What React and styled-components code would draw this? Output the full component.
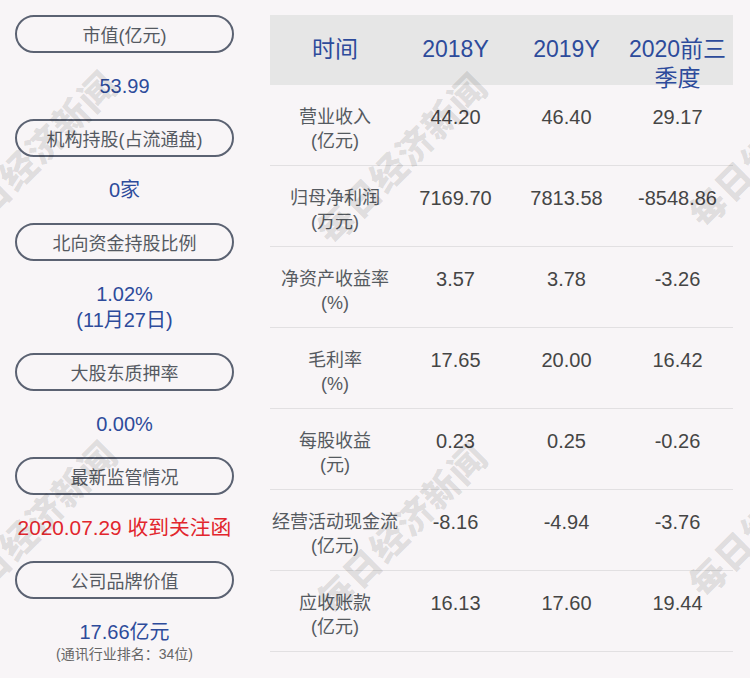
import styled, { createGlobalStyle } from 'styled-components';

const GlobalStyle = createGlobalStyle`
    body {
        margin: 0;
        background-color: #f8f5f7;
        font-family: "Liberation Sans", "Noto Sans CJK SC", sans-serif;
    }
`

const Page = styled.div`
    position: relative;
    width: 750px;
    height: 678px;
    overflow: hidden;
    box-sizing: border-box;
    padding: 15px;
    display: flex;
    gap: 36px;
`

// colonna sinistra
const Side = styled.div`
    width: 219px;
    display: flex;
    flex-direction: column;
`
const Pill = styled.div`
    height: 38px;
    box-sizing: border-box;
    border: 2px solid #5b6272;
    border-radius: 19px;
    display: flex;
    align-items: center;
    justify-content: center;
    font-size: 18px;
    color: #555a62;
`
const Value = styled.div`
    padding: 20px 0;
    text-align: center;
    font-size: ${p => p.$red ? '20.8px' : '20px'};
    line-height: 26px;
    white-space: nowrap;
    color: ${p => p.$red ? '#e2262d' : '#2d4b9b'};
`
const Note = styled.div`
    font-size: 14px;
    line-height: 18px;
    color: #666;
    margin-top: -20px;
    text-align: center;
`

// tabella
const Table = styled.div`
    width: 463px;
    display: grid;
    grid-template-columns: 130px repeat(3, 111px);
    grid-auto-rows: min-content;
`
const Head = styled.div`
    height: 70px;
    box-sizing: border-box;
    padding-top: 20px;
    background-color: #e6e6e6;
    text-align: center;
    font-size: 23px;
    line-height: 29px;
    color: #2d4b9b;
`
const Cell = styled.div`
    height: 81px;
    box-sizing: border-box;
    padding-top: 20px;
    border-bottom: 1px solid #e2e0e2;
    text-align: center;
    line-height: 24px;
    font-size: ${p => p.$label ? '18px' : '20px'};
    color: ${p => p.$label ? '#555a60' : '#454545'};
`

// filigrana
const Mark = styled.div`
    position: absolute;
    transform: translate(-50%, -50%) rotate(-45deg);
    font-size: 36px;
    font-weight: 900;
    letter-spacing: 1px;
    white-space: nowrap;
    font-family: "Noto Sans CJK SC", sans-serif;
    color: rgba(0, 0, 0, 0.11);
    pointer-events: none;
`

const side = [
    { title: '市值(亿元)', lines: ['53.99'] },
    { title: '机构持股(占流通盘)', lines: ['0家'] },
    { title: '北向资金持股比例', lines: ['1.02%', '(11月27日)'] },
    { title: '大股东质押率', lines: ['0.00%'] },
    { title: '最新监管情况', lines: ['2020.07.29 收到关注函'], red: true },
    { title: '公司品牌价值', lines: ['17.66亿元'], note: '(通讯行业排名：34位)' },
]

const rows = [
    ['营业收入', '(亿元)', '44.20', '46.40', '29.17'],
    ['归母净利润', '(万元)', '7169.70', '7813.58', '-8548.86'],
    ['净资产收益率', '(%)', '3.57', '3.78', '-3.26'],
    ['毛利率', '(%)', '17.65', '20.00', '16.42'],
    ['每股收益', '(元)', '0.23', '0.25', '-0.26'],
    ['经营活动现金流', '(亿元)', '-8.16', '-4.94', '-3.76'],
    ['应收账款', '(亿元)', '16.13', '17.60', '19.44'],
]

const marks = [
    [30, 155], [400, 157], [772, 140],
    [30, 525], [400, 527], [772, 510],
]

export default function App() {
    return (
        <Page>
            <GlobalStyle />
            <Side>
                {side.map((s, i) => (
                    <div key={i}>
                        <Pill>{s.title}</Pill>
                        <Value $red={s.red}>
                            {s.lines.map((l, j) => <div key={j}>{l}</div>)}
                        </Value>
                        {s.note && <Note>{s.note}</Note>}
                    </div>
                ))}
            </Side>
            <Table>
                <Head>时间</Head>
                <Head>2018Y</Head>
                <Head>2019Y</Head>
                <Head>2020前三季度</Head>
                {rows.map((r, i) => [
                    <Cell $label key={i + 'l'}>{r[0]}<br />{r[1]}</Cell>,
                    <Cell key={i + 'a'}>{r[2]}</Cell>,
                    <Cell key={i + 'b'}>{r[3]}</Cell>,
                    <Cell key={i + 'c'}>{r[4]}</Cell>,
                ])}
            </Table>
            {marks.map(([x, y], i) => (
                <Mark key={i} style={{ left: x, top: y }}>每日经济新闻</Mark>
            ))}
        </Page>
    )
}
